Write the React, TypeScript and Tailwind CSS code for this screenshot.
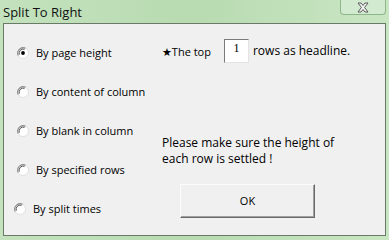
import React from "react";

const font = { fontFamily: '"Open Sans", "DejaVu Sans", sans-serif' };

function Radio({ checked }: { checked?: boolean }) {
  return (
    <svg width="12" height="12" viewBox="0 0 12 12" className="shrink-0">
      <circle cx="6" cy="6" r="5.5" fill="#ffffff" stroke="#d8d8d8" strokeWidth="0.8" />
      <path d="M1.2 8.5 A5.5 5.5 0 0 1 8.5 1.2" stroke="#8a8a8a" strokeWidth="1.1" fill="none" />
      <path d="M2.3 7.6 A4.2 4.2 0 0 1 7.6 2.3" stroke="#505050" strokeWidth="1" fill="none" />
      {checked && <circle cx="6" cy="6" r="1.9" fill="#000000" />}
    </svg>
  );
}

function Option({ label, checked, shift }: { label: string; checked?: boolean; shift?: boolean }) {
  return (
    <div className={`flex items-center h-[39px] gap-[7px] ${shift ? "ml-[10px]" : "ml-[13px]"}`}>
      <Radio checked={checked} />
      <span className="text-[11px] text-black leading-none">{label}</span>
    </div>
  );
}

export default function App() {
  return (
    <div
      className="w-[389px] h-[240px] flex flex-col bg-gradient-to-r from-[#c3e2bd] via-[#b8dbb1] to-[#c9e6c3]"
      style={font}
    >
      {/* Title bar */}
      <div className="h-[23px] flex items-start justify-between">
        <span className="ml-[3px] mt-[6px] text-[13px] leading-none text-[#111]">Split To Right</span>
        <div className="mr-[3px] w-[46px] h-[15px] rounded-b-[4px] border border-t-0 border-[#8fb58a] bg-[#d2ead0] flex items-center justify-center">
          <svg width="14" height="11" viewBox="0 0 14 11">
            <path
              d="M2 1 L5 1 L7 3.5 L9 1 L12 1 L8.6 5.5 L12 10 L9 10 L7 7.5 L5 10 L2 10 L5.4 5.5 Z"
              fill="#f4f4f4"
              stroke="#4a4a4a"
              strokeWidth="0.9"
              strokeLinejoin="round"
            />
          </svg>
        </div>
      </div>

      {/* Client area */}
      <div className="mx-[3px] h-[213px] border border-[#6b7a68] bg-[#f0f0f0] flex">
        <div className="w-[158px] flex flex-col pt-[9px]">
          <Option label="By page height" checked />
          <Option label="By content of column" />
          <Option label="By blank in column" />
          <Option label="By specified rows" />
          <Option label="By split times" shift />
        </div>
        <div className="flex-1 flex flex-col text-[11px] text-black">
          <div className="flex items-center mt-[15px] h-[24px]">
            <span className="leading-none">★The top</span>
            <div className="ml-[13px] w-[25px] h-[24px] bg-white border border-t-[#7a7a7a] border-l-[#7a7a7a] border-r-[#e3e3e3] border-b-[#e3e3e3] flex justify-center pt-[2px]">
              <span className="text-[12px] leading-none" style={{ fontFamily: '"Liberation Serif", serif' }}>
                1
              </span>
            </div>
            <span className="ml-[4px] leading-none text-[12px]">rows as headline.</span>
          </div>
          <div className="mt-[72px] leading-[16px] text-[12px]">
            <div>Please make sure the height of</div>
            <div>each row is settled !</div>
          </div>
          <div className="mt-[17px] ml-[18px] w-[135px] h-[34px] border border-t-[#fcfcfc] border-l-[#fcfcfc] border-r-[#696969] border-b-[#696969] bg-[#f0f0f0] shadow-[inset_-1px_-1px_0_#a0a0a0] flex items-center justify-center">
            OK
          </div>
        </div>
      </div>
    </div>
  );
}
